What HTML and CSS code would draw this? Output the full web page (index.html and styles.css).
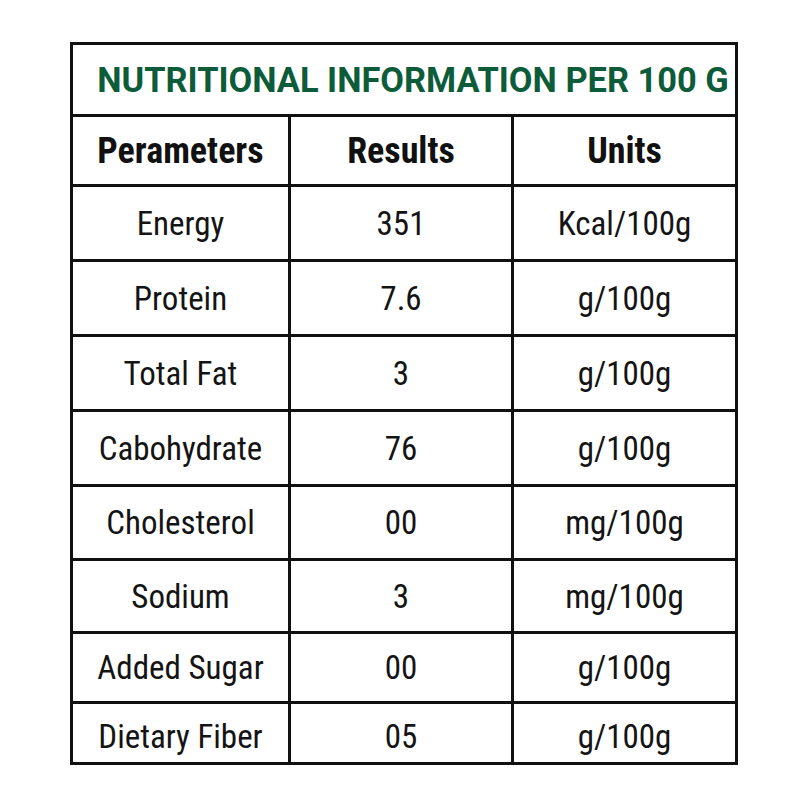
FILE: index.html
```
<!DOCTYPE html>
<html>
<head>
<meta charset="utf-8">
<link rel="stylesheet" href="styles.css">
</head>
<body>
<div class="page">
  <table class="nutri">
    <colgroup>
      <col class="c1">
      <col class="c2">
      <col class="c3">
    </colgroup>
    <tr class="title-row">
      <th colspan="3" class="title">NUTRITIONAL INFORMATION PER 100 G</th>
    </tr>
    <tr class="head-row">
      <th>Perameters</th>
      <th>Results</th>
      <th>Units</th>
    </tr>
    <tr class="r75"><td>Energy</td><td>351</td><td>Kcal/100g</td></tr>
    <tr class="r75"><td>Protein</td><td>7.6</td><td>g/100g</td></tr>
    <tr class="r75"><td>Total Fat</td><td>3</td><td>g/100g</td></tr>
    <tr class="r75"><td>Cabohydrate</td><td>76</td><td>g/100g</td></tr>
    <tr class="r74"><td>Cholesterol</td><td>00</td><td>mg/100g</td></tr>
    <tr class="r73"><td>Sodium</td><td>3</td><td>mg/100g</td></tr>
    <tr class="r70"><td>Added Sugar</td><td>00</td><td>g/100g</td></tr>
    <tr class="r61"><td>Dietary Fiber</td><td>05</td><td>g/100g</td></tr>
  </table>
</div>
</body>
</html>
```
FILE: styles.css
```
html, body {
  margin: 0;
  padding: 0;
  background: #ffffff;
}

.page {
  padding: 42px 0 0 70px;
}

.nutri {
  border-collapse: collapse;
  width: 665px;
  table-layout: fixed;
  font-family: "Roboto", "Liberation Sans", sans-serif;
  font-stretch: 75%;
  color: #141414;
}

.nutri th,
.nutri td {
  border: 3px solid #111111;
  text-align: center;
  vertical-align: middle;
  padding: 0;
}

.c1 { width: 218px; }
.c2 { width: 223px; }
.c3 { width: 224px; }

.title-row { height: 72px; }
.nutri .title {
  font-size: 34.4px;
  font-weight: 700;
  font-stretch: 100%;
  color: #0c5b39;
  padding-left: 18px;
}

.head-row { height: 70px; }
.head-row th {
  font-size: 36px;
  font-weight: 700;
  color: #111111;
}

.nutri td {
  font-size: 33px;
  font-weight: 400;
}

.r75 { height: 75px; }
.r74 { height: 74px; }
.r73 { height: 73px; }
.r70 { height: 70px; }
.r61 { height: 61px; }
.nutri .r61 td { padding-top: 6px; }
```
